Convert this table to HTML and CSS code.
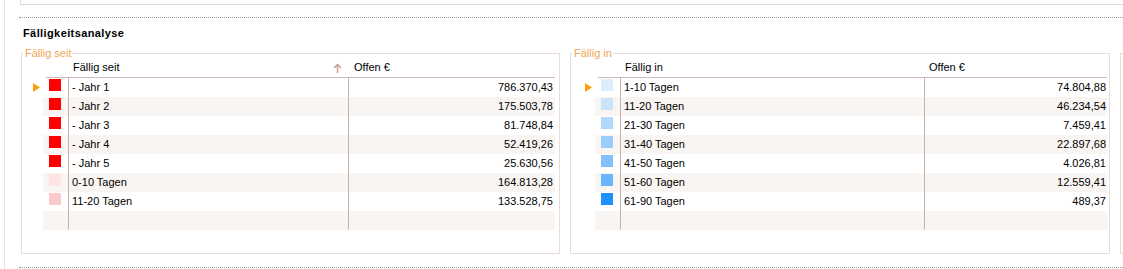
FILE: index.html
```html
<!DOCTYPE html>
<html lang="de">
<head>
<meta charset="utf-8">
<title>Fälligkeitsanalyse</title>
<link rel="stylesheet" href="styles.css">
</head>
<body>
<div class="pane">
  <div class="topbox"></div>
  <div class="dots"></div>
  <h2 class="title">Fälligkeitsanalyse</h2>
  <div class="groups">
    <fieldset class="group group--since">
      <legend class="group__legend">Fällig seit</legend>
      <div class="grid">
        <div class="grid__head">
          <div class="head__swatch"></div>
          <div class="head__name"><span>Fällig seit</span>
            <svg class="sort" width="9" height="10" viewBox="0 0 9 10"><path d="M4.5 1.5V10M1 5L4.5 1.5L8 5" fill="none" stroke="#c9998a" stroke-width="1.4"/></svg>
          </div>
          <div class="head__value">Offen €</div>
        </div>
        <div class="row">
          <div class="row__ind"><svg width="7" height="9" viewBox="0 0 7 9"><polygon points="0,0 7,4.5 0,9" fill="#f5a10f"/></svg></div>
          <div class="row__body"><div class="cell cell--swatch"><span class="swatch" style="background:#ff0000"></span></div><div class="cell cell--name">- Jahr 1</div><div class="cell cell--value">786.370,43</div></div>
        </div>
        <div class="row row--alt">
          <div class="row__ind"></div>
          <div class="row__body"><div class="cell cell--swatch"><span class="swatch" style="background:#ff0000"></span></div><div class="cell cell--name">- Jahr 2</div><div class="cell cell--value">175.503,78</div></div>
        </div>
        <div class="row">
          <div class="row__ind"></div>
          <div class="row__body"><div class="cell cell--swatch"><span class="swatch" style="background:#ff0000"></span></div><div class="cell cell--name">- Jahr 3</div><div class="cell cell--value">81.748,84</div></div>
        </div>
        <div class="row row--alt">
          <div class="row__ind"></div>
          <div class="row__body"><div class="cell cell--swatch"><span class="swatch" style="background:#ff0000"></span></div><div class="cell cell--name">- Jahr 4</div><div class="cell cell--value">52.419,26</div></div>
        </div>
        <div class="row">
          <div class="row__ind"></div>
          <div class="row__body"><div class="cell cell--swatch"><span class="swatch" style="background:#ff0000"></span></div><div class="cell cell--name">- Jahr 5</div><div class="cell cell--value">25.630,56</div></div>
        </div>
        <div class="row row--alt">
          <div class="row__ind"></div>
          <div class="row__body"><div class="cell cell--swatch"><span class="swatch" style="background:#fde3e3"></span></div><div class="cell cell--name">0-10 Tagen</div><div class="cell cell--value">164.813,28</div></div>
        </div>
        <div class="row">
          <div class="row__ind"></div>
          <div class="row__body"><div class="cell cell--swatch"><span class="swatch" style="background:#fbc9c9"></span></div><div class="cell cell--name">11-20 Tagen</div><div class="cell cell--value">133.528,75</div></div>
        </div>
        <div class="row row--alt">
          <div class="row__ind"></div>
          <div class="row__body"><div class="cell cell--swatch"></div><div class="cell cell--name"></div><div class="cell cell--value"></div></div>
        </div>
      </div>
    </fieldset>

    <fieldset class="group group--in">
      <legend class="group__legend">Fällig in</legend>
      <div class="grid">
        <div class="grid__head">
          <div class="head__swatch"></div>
          <div class="head__name"><span>Fällig in</span></div>
          <div class="head__value">Offen €</div>
        </div>
        <div class="row">
          <div class="row__ind"><svg width="7" height="9" viewBox="0 0 7 9"><polygon points="0,0 7,4.5 0,9" fill="#f5a10f"/></svg></div>
          <div class="row__body"><div class="cell cell--swatch"><span class="swatch" style="background:#deedfb"></span></div><div class="cell cell--name">1-10 Tagen</div><div class="cell cell--value">74.804,88</div></div>
        </div>
        <div class="row row--alt">
          <div class="row__ind"></div>
          <div class="row__body"><div class="cell cell--swatch"><span class="swatch" style="background:#c9e3fb"></span></div><div class="cell cell--name">11-20 Tagen</div><div class="cell cell--value">46.234,54</div></div>
        </div>
        <div class="row">
          <div class="row__ind"></div>
          <div class="row__body"><div class="cell cell--swatch"><span class="swatch" style="background:#b2d8fb"></span></div><div class="cell cell--name">21-30 Tagen</div><div class="cell cell--value">7.459,41</div></div>
        </div>
        <div class="row row--alt">
          <div class="row__ind"></div>
          <div class="row__body"><div class="cell cell--swatch"><span class="swatch" style="background:#9bcdfc"></span></div><div class="cell cell--name">31-40 Tagen</div><div class="cell cell--value">22.897,68</div></div>
        </div>
        <div class="row">
          <div class="row__ind"></div>
          <div class="row__body"><div class="cell cell--swatch"><span class="swatch" style="background:#82c1fd"></span></div><div class="cell cell--name">41-50 Tagen</div><div class="cell cell--value">4.026,81</div></div>
        </div>
        <div class="row row--alt">
          <div class="row__ind"></div>
          <div class="row__body"><div class="cell cell--swatch"><span class="swatch" style="background:#69b5fe"></span></div><div class="cell cell--name">51-60 Tagen</div><div class="cell cell--value">12.559,41</div></div>
        </div>
        <div class="row">
          <div class="row__ind"></div>
          <div class="row__body"><div class="cell cell--swatch"><span class="swatch" style="background:#1e90ff"></span></div><div class="cell cell--name">61-90 Tagen</div><div class="cell cell--value">489,37</div></div>
        </div>
        <div class="row row--alt">
          <div class="row__ind"></div>
          <div class="row__body"><div class="cell cell--swatch"></div><div class="cell cell--name"></div><div class="cell cell--value"></div></div>
        </div>
      </div>
    </fieldset>

    <fieldset class="group group--more"></fieldset>
  </div>
  <div class="dots dots--bottom"></div>
</div>
</body>
</html>
```
FILE: styles.css
```css
html, body {
  margin: 0;
  padding: 0;
  background: #ffffff;
  overflow: hidden;
}

body {
  font-family: "Liberation Sans", Arial, sans-serif;
  font-size: 11px;
  color: #000000;
  width: 1123px;
  height: 269px;
}

.pane {
  margin-left: 4px;
  border-left: 1px solid #efdfdd;
  height: 269px;
  padding-left: 14px;
  box-sizing: border-box;
  overflow: hidden;
}

.topbox {
  margin-left: 1px;
  height: 4px;
  border-left: 1px solid #e2dada;
  border-bottom: 1px solid #e2dada;
}

.dots {
  margin-top: 12px;
  border-top: 1px dotted #9a9a9a;
}

.dots--bottom {
  margin-top: 13px;
}

.title {
  margin: 9px 0 0 4px;
  font-size: 11px;
  line-height: 13px;
  font-weight: bold;
  letter-spacing: 0.4px;
  height: 13px;
}

.groups {
  margin-top: 8px;
  margin-left: 2px;
  display: flex;
  align-items: flex-start;
  gap: 10px;
  white-space: nowrap;
}

.group {
  margin: 0;
  padding: 0 4px 23px 0;
  border: 1px solid #ecdcd8;
  min-inline-size: 0;
  flex: none;
  box-sizing: border-box;
}

.group__legend {
  margin-left: 1px;
  padding: 0 1px 0 2px;
  line-height: 10px;
  color: #f2a454;
}

.group--since {
  width: 539px;
  --ind: 21px;
  --name: 280px;
}

.group--in {
  width: 540px;
  padding-right: 2px;
  --ind: 24px;
  --name: 304px;
}

.group--more {
  width: 540px;
  height: 201px;
  margin-top: 5px;
}

.grid {
  width: calc(var(--ind) + 512px);
}

.grid__head {
  display: flex;
  height: 19px;
  line-height: 19px;
  margin-left: calc(var(--ind) + 3px);
  border-bottom: 1px solid #cdbab7;
}

.head__swatch {
  width: 22px;
  flex: none;
}

.head__name {
  width: var(--name);
  flex: none;
  box-sizing: border-box;
  padding: 0 6px 0 5px;
  display: flex;
  align-items: center;
  justify-content: space-between;
}

.sort {
  display: block;
  margin-top: 1px;
}

.head__value {
  flex: 1;
  padding-left: 6px;
}

.group--in .head__value {
  padding-left: 5px;
}

.row {
  display: flex;
  height: 19px;
}

.row__ind {
  width: var(--ind);
  flex: none;
  display: flex;
  align-items: flex-start;
  justify-content: flex-end;
  padding-top: 5px;
  padding-right: 3px;
  box-sizing: border-box;
}

.row__ind svg {
  display: block;
}

.row__body {
  flex: 1;
  display: flex;
  line-height: 19px;
}

.row--alt .row__body {
  background: #f9f5f2;
}

.cell--swatch {
  width: 25px;
  flex: none;
  box-sizing: border-box;
  padding: 1px 0 0 6px;
}

.swatch {
  display: block;
  width: 12px;
  height: 12px;
}

.cell--name {
  width: var(--name);
  flex: none;
  box-sizing: border-box;
  border-left: 1px solid #c7b0ae;
  padding-left: 3px;
}

.cell--value {
  flex: 1;
  border-left: 1px solid #c7b0ae;
  text-align: right;
  padding-right: 2px;
}

.group--in .cell--value {
  padding-right: 1px;
}
```
